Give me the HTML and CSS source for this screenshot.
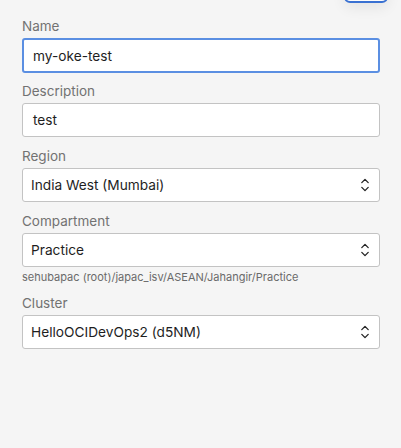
FILE: index.html
```html
<!DOCTYPE html>
<html>
<head>
<meta charset="utf-8">
<link rel="stylesheet" href="styles.css">
</head>
<body>
<div class="page">
  <div class="top-button"></div>
  <form class="form">
    <div class="field">
      <label class="label">Name</label>
      <div class="input focused">my-oke-test</div>
    </div>
    <div class="field">
      <label class="label">Description</label>
      <div class="input">test</div>
    </div>
    <div class="field">
      <label class="label">Region</label>
      <div class="select"><span>India West (Mumbai)</span>
        <svg class="chev" width="10" height="16" viewBox="0 0 10 16"><path d="M1.8 5.6 L5 2.4 L8.2 5.6" fill="none" stroke="#222" stroke-width="1.3" stroke-linecap="round" stroke-linejoin="round"/><path d="M1.8 10.4 L5 13.6 L8.2 10.4" fill="none" stroke="#222" stroke-width="1.3" stroke-linecap="round" stroke-linejoin="round"/></svg>
      </div>
    </div>
    <div class="field">
      <label class="label">Compartment</label>
      <div class="select"><span>Practice</span>
        <svg class="chev" width="10" height="16" viewBox="0 0 10 16"><path d="M1.8 5.6 L5 2.4 L8.2 5.6" fill="none" stroke="#222" stroke-width="1.3" stroke-linecap="round" stroke-linejoin="round"/><path d="M1.8 10.4 L5 13.6 L8.2 10.4" fill="none" stroke="#222" stroke-width="1.3" stroke-linecap="round" stroke-linejoin="round"/></svg>
      </div>
      <div class="hint">sehubapac (root)/japac_isv/ASEAN/Jahangir/Practice</div>
    </div>
    <div class="field">
      <label class="label">Cluster</label>
      <div class="select"><span>HelloOCIDevOps2 (d5NM)</span>
        <svg class="chev" width="10" height="16" viewBox="0 0 10 16"><path d="M1.8 5.6 L5 2.4 L8.2 5.6" fill="none" stroke="#222" stroke-width="1.3" stroke-linecap="round" stroke-linejoin="round"/><path d="M1.8 10.4 L5 13.6 L8.2 10.4" fill="none" stroke="#222" stroke-width="1.3" stroke-linecap="round" stroke-linejoin="round"/></svg>
      </div>
    </div>
  </form>
</div>
</body>
</html>
```
FILE: styles.css
```css
html, body {
  margin: 0;
  padding: 0;
  background: #f5f5f5;
  font-family: Inter, "Liberation Sans", sans-serif;
}
.page {
  position: relative;
  width: 401px;
  height: 448px;
  overflow: hidden;
}
.top-button {
  position: absolute;
  left: 344px;
  top: -27px;
  width: 40px;
  height: 26px;
  border: 2px solid #3a71d2;
  border-radius: 6px;
  background: #fdfdfd;
  box-shadow: 0 5px 14px rgba(0,0,0,0.07);
}
.form {
  display: flex;
  flex-direction: column;
  gap: 11px;
  padding: 18px 0 0 22px;
  width: 358px;
  margin: 0;
}
.field {
  display: flex;
  flex-direction: column;
}
.label {
  font-size: 13.5px;
  line-height: 16px;
  color: #727272;
  margin-bottom: 4px;
}
.input, .select {
  box-sizing: border-box;
  height: 34px;
  background: #fff;
  border: 1px solid #c3c3c3;
  border-radius: 3px;
  font-size: 13.7px;
  color: #1e1e1e;
  display: flex;
  align-items: center;
  padding: 0 10px;
}
.input.focused {
  border: 2px solid #5b8fe2;
  padding: 0 9px;
  height: 35px;
  margin-bottom: -1px;
}
.select {
  justify-content: space-between;
  padding: 0 9px 0 8px;
}
.chev {
  display: block;
}
.hint {
  font-size: 11px;
  line-height: 14px;
  color: #6a6a6a;
  margin-top: 3px;
}
```
